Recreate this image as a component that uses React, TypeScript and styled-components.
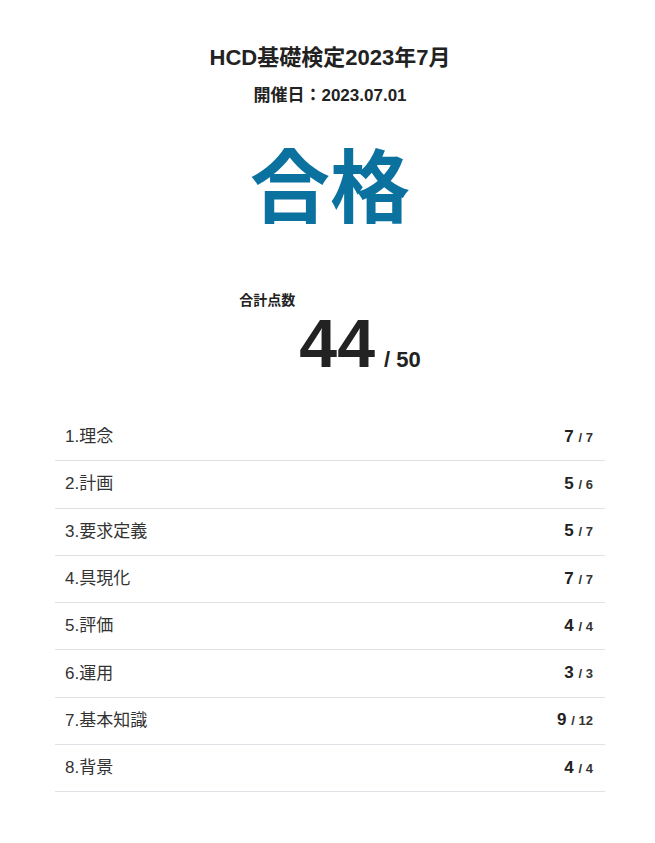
import styled, { createGlobalStyle } from 'styled-components'

const GlobalStyle = createGlobalStyle`
  body {
    margin: 0;
    background: #ffffff;
    font-family: "Liberation Sans", "Noto Sans CJK JP", sans-serif;
    color: #222222;
  }
`

type Section = {
  name: string
  score: number
  max: number
}

const sections: Section[] = [
  { name: '1.理念', score: 7, max: 7 },
  { name: '2.計画', score: 5, max: 6 },
  { name: '3.要求定義', score: 5, max: 7 },
  { name: '4.具現化', score: 7, max: 7 },
  { name: '5.評価', score: 4, max: 4 },
  { name: '6.運用', score: 3, max: 3 },
  { name: '7.基本知識', score: 9, max: 12 },
  { name: '8.背景', score: 4, max: 4 },
]

const Page = styled.main`
  width: 550px;
  margin: 0 0 0 55px;
  padding-top: 43px;
  text-align: center;
`

const Title = styled.h1`
  margin: 0;
  font-size: 22px;
  line-height: 30px;
  font-weight: 700;
  color: #222222;
`

const DateLine = styled.p`
  margin: 11px 0 0;
  font-size: 17px;
  line-height: 24px;
  font-weight: 700;
  color: #222222;
`

const Result = styled.div`
  margin-top: 33px;
  font-size: 80px;
  line-height: 96px;
  font-weight: 700;
  color: #0b72a0;
`

const Total = styled.div`
  display: inline-block;
  margin-top: 54px;
  text-align: left;
`

const TotalLabel = styled.div`
  font-size: 14px;
  line-height: 18px;
  font-weight: 700;
  color: #222222;
`

const TotalScore = styled.div`
  padding-left: 60px;
  display: flex;
  align-items: baseline;
  gap: 9px;
  margin-top: 1px;
`

const BigNumber = styled.span`
  font-size: 68px;
  line-height: 66px;
  font-weight: 700;
  color: #222222;
`

const BigMax = styled.span`
  font-size: 22px;
  font-weight: 700;
  color: #222222;
`

const List = styled.ul`
  list-style: none;
  margin: 38px 0 0;
  padding: 0;
  text-align: left;
`

const Row = styled.li`
  display: flex;
  justify-content: space-between;
  align-items: center;
  height: 46.3px;
  padding: 0 12px 0 10px;
  border-bottom: 1px solid #dee2e6;
`

const Label = styled.span`
  font-size: 17px;
  line-height: 24px;
  color: #333333;
`

const Score = styled.span`
  font-size: 17px;
  line-height: 24px;
  font-weight: 700;
  color: #222222;
`

const Max = styled.span`
  font-size: 13px;
  font-weight: 700;
  color: #333333;
`

export default function App() {
  return (
    <>
      <GlobalStyle />
      <Page>
        <Title>HCD基礎検定2023年7月</Title>
        <DateLine>開催日：2023.07.01</DateLine>
        <Result>合格</Result>
        <Total>
          <TotalLabel>合計点数</TotalLabel>
          <TotalScore>
            <BigNumber>44</BigNumber>
            <BigMax>/ 50</BigMax>
          </TotalScore>
        </Total>
        <List>
          {sections.map((s) => (
            <Row key={s.name}>
              <Label>{s.name}</Label>
              <Score>
                {s.score} <Max>/ {s.max}</Max>
              </Score>
            </Row>
          ))}
        </List>
      </Page>
    </>
  )
}
